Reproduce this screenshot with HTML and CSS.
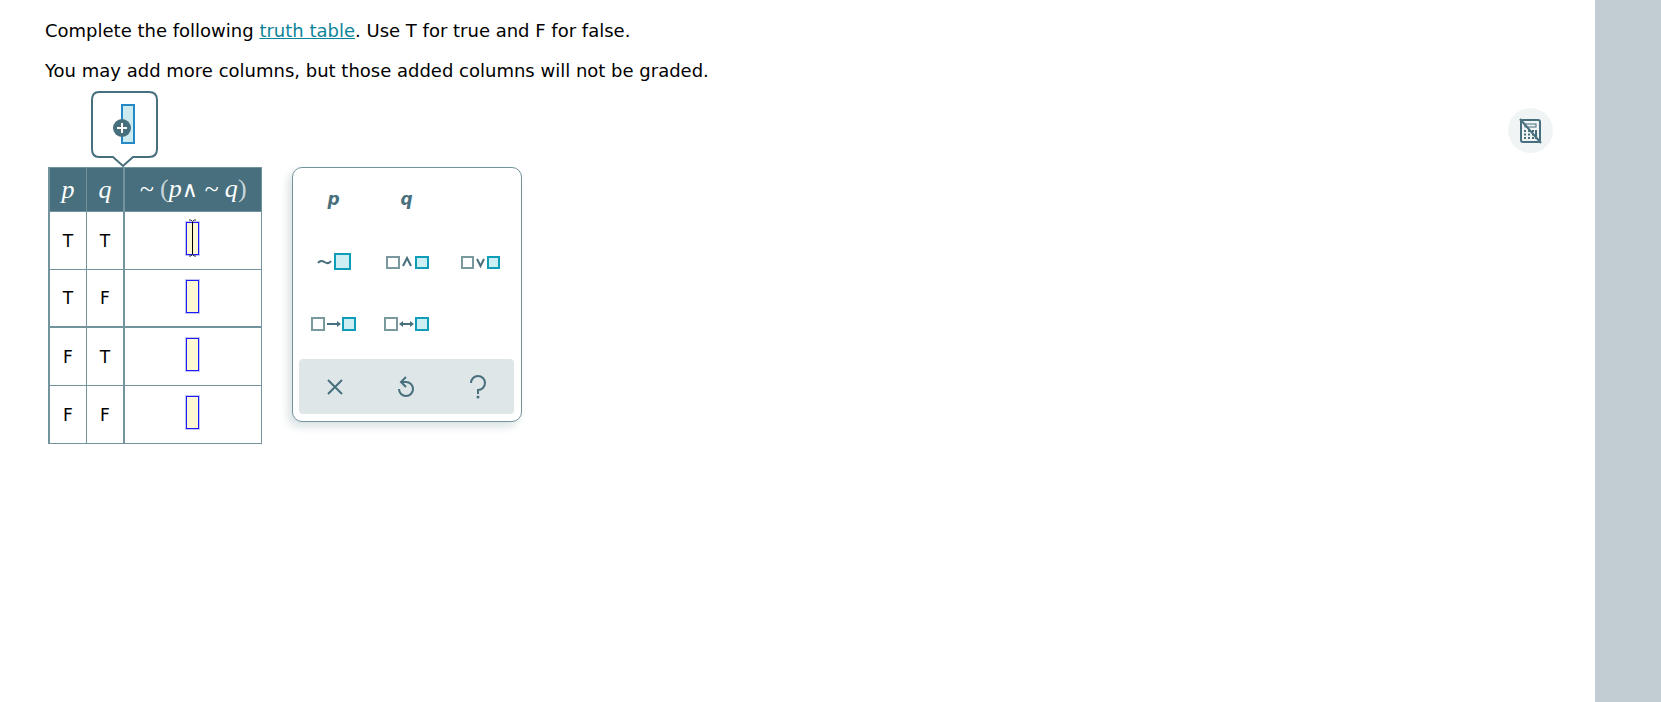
FILE: index.html
```
<!DOCTYPE html>
<html lang="en">
<head>
    <meta charset="UTF-8">
    <meta name="viewport" content="width=device-width, initial-scale=1.0">
    <title>Truth table</title>
    <link rel="stylesheet" href="styles.css">
</head>
<body>
    <main class="question">
        <p>Complete the following <a href="#">truth table</a>. Use T for true and F for false.</p>
        <p>You may add more columns, but those added columns will not be graded.</p>

        <div class="workspace">
            <div class="table-area">
                <button type="button" class="add-column" aria-label="Add column">
                    <svg width="67" height="78" viewBox="0 0 67 78">
                        <path d="M8 1H58Q66 1 66 9V58Q66 66 58 66H42L32 75L22 66H8Q1 66 1 58V9Q1 1 8 1Z" fill="#fff" stroke="#476f7d" stroke-width="2"/>
                        <rect x="31" y="14" width="12" height="38" fill="#cdeaf0" stroke="#2489c5" stroke-width="2"/>
                        <circle cx="31" cy="37" r="9" fill="#476f7d"/>
                        <path d="M26 37H36M31 32V42" stroke="#fff" stroke-width="2"/>
                    </svg>
                </button>

                <table class="truth-table">
                    <thead>
                        <tr>
                            <th class="letter">p</th>
                            <th class="letter">q</th>
                            <th class="formula">~ <span class="paren">(</span>p<span class="and">∧</span> ~ q<span class="paren">)</span></th>
                        </tr>
                    </thead>
                    <tbody>
                        <tr>
                            <td>T</td>
                            <td>T</td>
                            <td class="answer">
                                <input type="text" maxlength="1" aria-label="Row 1 value">
                                <svg class="caret" width="9" height="38" viewBox="0 0 9 38">
                                    <path d="M1 1H3L4.500 2.500L6 1H8M1 37H3L4.500 35.500L6 37H8" fill="none" stroke="#333"/>
                                    <path d="M4.500 3V35" stroke="#000"/>
                                </svg>
                            </td>
                        </tr>
                        <tr class="thick">
                            <td>T</td>
                            <td>F</td>
                            <td class="answer"><input type="text" maxlength="1" aria-label="Row 2 value"></td>
                        </tr>
                        <tr>
                            <td>F</td>
                            <td>T</td>
                            <td class="answer"><input type="text" maxlength="1" aria-label="Row 3 value"></td>
                        </tr>
                        <tr>
                            <td>F</td>
                            <td>F</td>
                            <td class="answer"><input type="text" maxlength="1" aria-label="Row 4 value"></td>
                        </tr>
                    </tbody>
                </table>
            </div>

            <div class="palette">
                <div class="symbols">
                    <button type="button" class="letter-btn">p</button>
                    <button type="button" class="letter-btn">q</button>
                    <span></span>

                    <button type="button" aria-label="Not">
                        <svg width="34" height="18" viewBox="0 0 34 18">
                            <path d="M1 10C3 7 6 8 7.500 9S12 11 14 8" fill="none" stroke="#476f7d" stroke-width="2"/>
                            <rect x="18" y="1" width="15" height="15" fill="#cdeef3" stroke="#0d9db9" stroke-width="2"/>
                        </svg>
                    </button>
                    <button type="button" aria-label="And">
                        <svg width="44" height="16" viewBox="0 0 44 16">
                            <rect x="2" y="3" width="12" height="11" fill="#fff" stroke="#7a999f" stroke-width="2"/>
                            <path d="M18 12L22 4L26 12" fill="none" stroke="#476f7d" stroke-width="2"/>
                            <rect x="31" y="3" width="12" height="11" fill="#cdeef3" stroke="#0d9db9" stroke-width="2"/>
                        </svg>
                    </button>
                    <button type="button" aria-label="Or">
                        <svg width="40" height="16" viewBox="0 0 40 16">
                            <rect x="2" y="3" width="11" height="11" fill="#fff" stroke="#7a999f" stroke-width="2"/>
                            <path d="M17 5L20.500 12L24 5" fill="none" stroke="#476f7d" stroke-width="2"/>
                            <rect x="28" y="3" width="11" height="11" fill="#cdeef3" stroke="#0d9db9" stroke-width="2"/>
                        </svg>
                    </button>

                    <button type="button" aria-label="Conditional">
                        <svg width="46" height="16" viewBox="0 0 46 16">
                            <rect x="1" y="2" width="12" height="12" fill="#fff" stroke="#7a999f" stroke-width="2"/>
                            <path d="M16 8H28" stroke="#476f7d" stroke-width="2"/>
                            <path d="M26 5V11L30 8Z" fill="#476f7d"/>
                            <rect x="32" y="2" width="12" height="12" fill="#cdeef3" stroke="#0d9db9" stroke-width="2"/>
                        </svg>
                    </button>
                    <button type="button" aria-label="Biconditional">
                        <svg width="46" height="16" viewBox="0 0 46 16">
                            <rect x="1" y="2" width="12" height="12" fill="#fff" stroke="#7a999f" stroke-width="2"/>
                            <path d="M18 8H27" stroke="#476f7d" stroke-width="2"/>
                            <path d="M19 5V11L15 8ZM26 5V11L30 8Z" fill="#476f7d"/>
                            <rect x="32" y="2" width="12" height="12" fill="#cdeef3" stroke="#0d9db9" stroke-width="2"/>
                        </svg>
                    </button>
                </div>

                <div class="actions">
                    <button type="button" aria-label="Clear">
                        <svg width="16" height="16" viewBox="0 0 16 16">
                            <path d="M1 1L15 15M15 1L1 15" stroke="#476f7d" stroke-width="2"/>
                        </svg>
                    </button>
                    <button type="button" aria-label="Undo">
                        <svg width="18" height="22" viewBox="0 0 18 22">
                            <path d="M2 13A7 7 0 1 0 9 6H4M9 1L4 6L9 11" fill="none" stroke="#476f7d" stroke-width="2"/>
                        </svg>
                    </button>
                    <button type="button" aria-label="Help">
                        <svg width="16" height="24" viewBox="0 0 16 24">
                            <path d="M1 8A7 7 0 1 1 8 15V19" fill="none" stroke="#476f7d" stroke-width="2"/>
                            <circle cx="8" cy="22" r="1.500" fill="#476f7d"/>
                        </svg>
                    </button>
                </div>
            </div>
        </div>
    </main>

    <aside class="tools">
        <button type="button" class="calculator" aria-label="Calculator not available">
            <svg width="24" height="26" viewBox="0 0 24 26">
                <rect x="2" y="2" width="19" height="22" rx="2" fill="none" stroke="#476f7d" stroke-width="2"/>
                <rect x="6" y="6" width="11" height="3" fill="none" stroke="#476f7d"/>
                <path d="M5 13H16M5 16.500H16M5 20H16" stroke="#476f7d" stroke-width="2" stroke-dasharray="2 2"/>
                <path d="M17 12V21" stroke="#476f7d" stroke-width="2"/>
                <path d="M1 1L22 25" stroke="#476f7d" stroke-width="2"/>
            </svg>
        </button>
    </aside>

    <div class="side-strip"></div>
</body>
</html>
```
FILE: styles.css
```
* {
    margin: 0;
    padding: 0;
    box-sizing: border-box;
}

body {
    font-family: "DejaVu Sans", Verdana, sans-serif;
    font-size: 18px;
    line-height: 22px;
    background-color: #fff;
    color: #000;
    display: flex;
    min-height: 100vh;
}

button {
    display: flex;
    align-items: center;
    justify-content: center;
    background: none;
    border: none;
    cursor: pointer;
}

svg {
    display: block;
}

.question {
    flex: 1;
    padding: 20px 0 20px 45px;
}

.question p {
    margin-bottom: 18px;
}

.question a {
    color: #0d8499;
}

/* Table and palette side by side, aligned at the bottom of the bubble */
.workspace {
    display: flex;
    align-items: flex-start;
    gap: 30px;
    padding-left: 3px;
    margin-top: -9px;
}

.add-column {
    margin-left: 43px;
}

/* Truth table */
.truth-table {
    border-collapse: separate;
    border-spacing: 0;
    border-left: 2px solid #74949d;
    border-top: 1px solid #74949d;
    margin-top: -2px;
}

th,
td {
    width: 37px;
    height: 58px;
    text-align: center;
    border-right: 1px solid #74949d;
    border-bottom: 1px solid #74949d;
}

th:nth-child(2),
td:nth-child(2) {
    width: 38px;
    border-right-width: 2px;
}

td {
    font-size: 17px;
}

th {
    height: 44px;
    background-color: #476f7d;
    color: #fff;
    font-family: "Liberation Serif", serif;
    font-size: 26px;
    font-style: italic;
    font-weight: normal;
}

.formula {
    width: 137px;
    white-space: nowrap;
}

.paren {
    font-style: normal;
    color: #c8d4d8;
}

.and {
    font-family: "DejaVu Sans", sans-serif;
    font-size: 22px;
    font-style: normal;
}

.thick td {
    border-bottom-width: 2px;
}

td.answer {
    position: relative;
    vertical-align: top;
    padding: 10px 2px 0 0;
}

.answer input {
    display: block;
    width: 13px;
    height: 33px;
    margin: 0 auto;
    background-color: #fff8d2;
    border: 1px solid #1a1aff;
    box-shadow: 0 0 0 1px #c4c4f5;
    outline: none;
}

/* Text cursor drawn over the active box */
.caret {
    position: absolute;
    top: 7px;
    left: 63px;
}

/* Symbol palette */
.palette {
    width: 230px;
    margin-top: 76px;
    padding: 1px 7px 7px 6px;
    border: 1px solid #74949d;
    border-radius: 10px;
    background-color: #fff;
    box-shadow: -4px 5px 8px #dbe2e4;
}

.symbols {
    display: grid;
    grid-template-columns: repeat(3, 1fr);
    grid-auto-rows: 62px;
    margin: 0 -2px 4px;
}

.letter-btn {
    padding-bottom: 2px;
    font-family: "DejaVu Sans", sans-serif;
    font-size: 17px;
    font-style: italic;
    font-weight: bold;
    color: #476f7d;
}

.actions {
    display: grid;
    grid-template-columns: repeat(3, 1fr);
    height: 55px;
    border-radius: 4px;
    background-color: #dfe6e8;
}

/* Right side of the page */
.tools {
    padding: 108px 42px 0 0;
}

.calculator {
    width: 45px;
    height: 45px;
    border-radius: 50%;
    background-color: #f0f4f5;
}

.side-strip {
    width: 66px;
    background-color: #c1cdd3;
}
```
